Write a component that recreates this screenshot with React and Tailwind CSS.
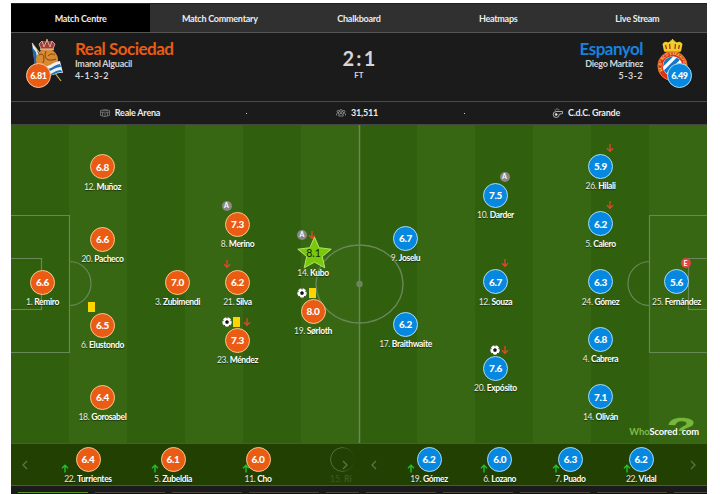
import clsx from "clsx";

const tabs = ["Match Centre", "Match Commentary", "Chalkboard", "Heatmaps", "Live Stream"];

// x / y are the centre of the rating badge inside the 696x318 pitch
const homePlayers = [
  { number: 1, name: "Remiro", rating: "6.6", x: 31.5, y: 157.5 },
  { number: 12, name: "Muñoz", rating: "6.8", x: 91.5, y: 42 },
  { number: 20, name: "Pacheco", rating: "6.6", x: 91.5, y: 114.5 },
  { number: 6, name: "Elustondo", rating: "6.5", x: 91.5, y: 200.5, events: ["yellow"] },
  { number: 18, name: "Gorosabel", rating: "6.4", x: 91.5, y: 272.5 },
  { number: 3, name: "Zubimendi", rating: "7.0", x: 166.5, y: 157.5 },
  { number: 8, name: "Merino", rating: "7.3", x: 226.5, y: 99.5, events: ["assist"] },
  { number: 21, name: "Silva", rating: "6.2", x: 226.5, y: 157.5, events: ["off"] },
  { number: 23, name: "Méndez", rating: "7.3", x: 226.5, y: 215.5, events: ["goal", "yellow", "off"] },
  { number: 14, name: "Kubo", rating: "8.1", x: 302, y: 128.5, events: ["assist", "off"], star: true },
  { number: 19, name: "Sørloth", rating: "8.0", x: 302, y: 186.5, events: ["goal", "yellow"] },
];

const awayPlayers = [
  { number: 9, name: "Joselu", rating: "6.7", x: 394.5, y: 113.5 },
  { number: 17, name: "Braithwaite", rating: "6.2", x: 394.5, y: 199.5 },
  { number: 10, name: "Darder", rating: "7.5", x: 484.5, y: 70.5, events: ["assist"] },
  { number: 12, name: "Souza", rating: "6.7", x: 484.5, y: 157, events: ["off"] },
  { number: 20, name: "Expósito", rating: "7.6", x: 484.5, y: 243.5, events: ["goal", "off"] },
  { number: 26, name: "Hilali", rating: "5.9", x: 589.5, y: 41.5, events: ["off"] },
  { number: 5, name: "Calero", rating: "6.2", x: 589.5, y: 99, events: ["off"] },
  { number: 24, name: "Gómez", rating: "6.3", x: 589.5, y: 157 },
  { number: 4, name: "Cabrera", rating: "6.8", x: 589.5, y: 214.5 },
  { number: 14, name: "Oliván", rating: "7.1", x: 589.5, y: 272 },
  { number: 25, name: "Fernández", rating: "5.6", x: 665.5, y: 157, events: ["error"] },
];

const homeSubs = [
  { number: 22, name: "Turrientes", rating: "6.4" },
  { number: 5, name: "Zubeldia", rating: "6.1" },
  { number: 11, name: "Cho", rating: "6.0" },
];

const awaySubs = [
  { number: 19, name: "Gómez", rating: "6.2" },
  { number: 6, name: "Lozano", rating: "6.0" },
  { number: 7, name: "Puado", rating: "6.3" },
  { number: 22, name: "Vidal", rating: "6.2" },
];

function EventIcon({ type }) {
  if (type === "yellow") {
    return (
      <span className="flex w-[10px] justify-center">
        <span className="h-[10px] w-[7px] bg-[#ffd500]" />
      </span>
    );
  }
  if (type === "off") {
    return (
      <svg className="h-[10px] w-[10px]" viewBox="0 0 10 10" fill="none" stroke="#e0492c" strokeWidth="1.3">
        <path d="M5 1v7.5M2 5.200 5 8.400l3-3.200" />
      </svg>
    );
  }
  if (type === "goal") {
    return (
      <svg className="h-[10px] w-[10px]" viewBox="0 0 10 10">
        <circle cx="5" cy="5" r="4.7" fill="#fff" />
        <path
          d="M5 3.1l1.9 1.4-.7 2.2H3.8l-.7-2.2zM3.6.5h2.8L5 1.6zM.4 4.3 1 2.5l.7 1.6zM9.6 4.3 9 2.5l-.7 1.6zM1.6 8.2 3 7.9l.1 1.4zM8.4 8.2 7 7.9l-.1 1.4z"
          fill="#111"
        />
      </svg>
    );
  }
  return (
    <span
      className={clsx(
        "flex h-[10px] w-[10px] items-center justify-center rounded-full text-[7px] leading-none font-bold text-white",
        type === "assist" ? "bg-[#888]" : "bg-[#e34444]"
      )}
    >
      {type === "assist" ? "A" : "E"}
    </span>
  );
}

function Rating({ value, home }) {
  return (
    <span
      className={clsx(
        "flex h-[25px] w-[25px] items-center justify-center rounded-full border text-[10px] leading-none font-black tracking-[-0.3px] text-white",
        home ? "border-[#f5c98c] bg-[#ea5b13]" : "border-[#a9dcf5] bg-[#0788e0]"
      )}
    >
      {value}
    </span>
  );
}

function StarRating({ value }) {
  return (
    <span className="relative flex h-[25px] w-[25px] items-center justify-center">
      <svg className="absolute -top-[5px] -left-[4px] h-[34px] w-[35px]" viewBox="0 0 35 34">
        <path
          d="M17.5 1 22.1 11.7 34.2 13.200 25.300 20.600 27.800 31.800 17.5 26.200 7.2 31.800 9.700 20.600 .8 13.200 12.9 11.7z"
          fill="#79c80b"
          stroke="#b9ed6c"
          strokeWidth=".9"
        />
      </svg>
      <span className="relative pl-px text-[10.5px] leading-none font-medium text-[#17300a]">{value}</span>
    </span>
  );
}

function PlayerName({ number, name }) {
  return (
    <span className="text-[8.5px] leading-[11px] tracking-[-0.35px] whitespace-nowrap text-[#e6ece1] [text-shadow:0_1px_1px_rgba(0,0,0,0.5)]">
      {number}. <b className="font-bold text-white">{name}</b>
    </span>
  );
}

function Player({ player, home }) {
  return (
    <div
      className="absolute flex w-0 -translate-y-[13px] flex-col items-center gap-[2.5px]"
      style={{ left: player.x, top: player.y }}
    >
      {player.star ? <StarRating value={player.rating} /> : <Rating value={player.rating} home={home} />}
      <PlayerName number={player.number} name={player.name} />
      {player.events ? (
        <div className={clsx("absolute -top-[11px] flex", home ? "-left-[16px]" : "-right-[14px]")}>
          {player.events.map((type) => (
            <EventIcon key={type} type={type} />
          ))}
        </div>
      ) : null}
    </div>
  );
}

function PitchLines() {
  return (
    <svg className="h-full w-full" viewBox="0 0 696 318" fill="none" stroke="#6a8759" strokeWidth="1.2">
      <path d="M348.500 0V318" strokeWidth="1.500" />
      <ellipse cx="348.500" cy="159" rx="43.500" ry="39" strokeWidth="1.400" />
      <circle cx="348.500" cy="159" r="3.200" fill="#6a8759" stroke="none" />
      <path d="M0 90.500H58.500V227.500H0M0 133.500H30.500V184.500H0M58.500 136.500a21.500 22 0 0 1 0 44" />
      <path d="M696 90.500H638.500V227.500H696M696 133.500H677.500V184.500H696M638.500 136.500a21.500 22 0 0 0 0 44" />
    </svg>
  );
}

function Logo() {
  return (
    <div className="absolute top-[291px] right-[8px] flex w-[68px] flex-col text-[9.400px] leading-[32px] font-bold tracking-[-0.1px] text-white">
      <svg className="absolute top-[1px] right-[5px] h-[18px] w-[26px]" viewBox="0 0 26 18">
        <path
          d="M.5 8C1.500 3 6.500.7 13.500.7 21 .7 25.800 2.800 25.600 6c-.2 3-4.600 4.300-7.600 5.400-1.800.7-2.700 1.500-3.200 2.600H10.600c.2-2 2-3.400 4.200-4.500 2.300-1.200 3.800-1.900 3.700-3.200-.1-1.400-2-2.100-4.800-2C9.500 4.400 8.300 6 7.300 8.200z"
          fill="#75b63b"
        />
      </svg>
      <span className="relative flex justify-end whitespace-nowrap">
        <span className="text-[#80b94a]">Who</span>Scored
        <span className="px-[1px] font-black text-[#80d03a]">.</span>com
      </span>
    </div>
  );
}

function Chevron({ right }) {
  return (
    <svg className="h-[10px] w-[6px] shrink-0" viewBox="0 0 6 10" fill="none" stroke="#5c7543" strokeWidth="1.3">
      <path d={right ? "M1 1l4 4-4 4" : "M5 1L1 5l4 4"} />
    </svg>
  );
}

function Sub({ player, home }) {
  return (
    <div className="relative flex w-0 flex-col items-center gap-[2.5px]">
      <Rating value={player.rating} home={home} />
      <div className="relative flex">
        <PlayerName number={player.number} name={player.name} />
        <svg
          className="absolute -top-[10px] -left-[3px] h-[9px] w-[8px]"
          viewBox="0 0 8 9"
          fill="none"
          stroke="#1fc32a"
          strokeWidth="1.4"
        >
          <path d="M4 8.500V1.500M1 4.300 4 1.300l3 3" />
        </svg>
      </div>
    </div>
  );
}

function HomeCrest() {
  return (
    <svg className="h-[44px] w-[35px]" viewBox="0 0 33 44">
      <path d="M2 4 31 42" stroke="#c7b552" strokeWidth="1.200" />
      <path d="M2 4l5 7 7 20-9-5z" fill="#e8eef4" />
      <path d="M2 8l4 5 3 16-4-2zM8 14l5 8v8z" fill="#1e69ab" />
      <circle cx="17" cy="21" r="11" fill="#d9892f" />
      <path d="M9 16c5-3 6 3 4 8M16 12c-3 8 2 11 10 8M18 17c3-3 5-2 7-1" stroke="#7c4517" fill="none" />
      <path d="M13 28c6 0 10-5 17-6l3 12c-6-1-11 4-18 3z" fill="#eef3f8" />
      <path d="M14 31c6 0 10-5 16-6l1 3c-6 0-10 5-16 5zM16 36c6 0 9-5 15-5l1 2c-6 0-8 3-14 4z" fill="#2471b5" />
      <path d="M11 10 9 5l3-3h10l3 3-2 5z" fill="#a63a3d" />
      <path d="M11 10 9 5l3-3 2 6 3-7 3 7 2-6 3 3-2 5z" fill="none" stroke="#d8c5a0" strokeWidth=".8" />
      <path d="M17 0v3M10 10.500h14" stroke="#d9b36c" strokeWidth="1.400" />
    </svg>
  );
}

function AwayCrest() {
  return (
    <svg className="h-[44px] w-[31px]" viewBox="0 0 31 44">
      <defs>
        <clipPath id="crest">
          <circle cx="15.500" cy="27" r="9.500" />
        </clipPath>
        <path id="ring" d="M7.500 34.500a11 11 0 1 1 16 0" />
      </defs>
      <circle cx="15.500" cy="27" r="15" fill="#d9331f" />
      <circle cx="15.500" cy="27" r="14.500" fill="none" stroke="#e4a72c" strokeWidth=".6" />
      <text fontSize="3.900" fontWeight="900" fill="#f7d146">
        <textPath href="#ring" startOffset="3">
          RL Dº RCD ESPANYOL
        </textPath>
      </text>
      <circle cx="15.500" cy="27" r="9.800" fill="#fff" />
      <path d="M1 30 18 13M4 37 26 15M10 41 30 21" stroke="#1679c5" strokeWidth="3.800" clipPath="url(#crest)" />
      <path d="M7 12.500 5.500 5Q8 1.500 11 3.500 15.500 0 20 3.500 23 1.500 25.500 5L24 12.500z" fill="#efd02b" />
      <path d="M9.500 10 8.500 6M13 10l-.4-5M18 10l.4-5M21.500 10l1-4" stroke="#b52c1d" strokeWidth="1.300" />
      <path d="M15.500 0v4M13.500 1.800h4" stroke="#f2d333" strokeWidth="1.300" />
      <path d="M8 12.500h15" stroke="#d79d1b" strokeWidth="1.300" />
    </svg>
  );
}

function StadiumIcon() {
  return (
    <svg className="h-[8px] w-[10px]" viewBox="0 0 10 8" fill="none" stroke="#8b8b8b" strokeWidth=".7">
      <path d="M.5 1.500Q5-.4 9.500 1.500V6.500Q5 8.500.5 6.500zM.5 3Q5 5 9.500 3M2.500 4v3M5 4.500v3M7.500 4v3M2 1.800h6" />
    </svg>
  );
}

function CrowdIcon() {
  return (
    <svg className="h-[8px] w-[10px]" viewBox="0 0 10 8" fill="none" stroke="#aaa" strokeWidth=".7">
      <circle cx="5" cy="2" r="1.400" />
      <circle cx="2.200" cy="2.500" r="1.100" />
      <circle cx="7.800" cy="2.500" r="1.100" />
      <path d="M2.800 7V5.500Q5 3 7.200 5.500V7zM.4 6.500V5Q1.500 3.500 3 4.500M9.600 6.500V5Q8.500 3.500 7 4.500" />
    </svg>
  );
}

function WhistleIcon() {
  return (
    <svg className="h-[10px] w-[11px]" viewBox="0 0 11 10" fill="none" stroke="#d0d0d0" strokeWidth=".8">
      <path d="M6 3.500H10.500V5.500L7.200 6.300A3 3 0 1 1 4.200 3.500zM3 1.500l.5 1M5 .3v1.400M7 1.300l-.6 1" />
      <circle cx="4.200" cy="6.400" r="1" fill="#fff" />
    </svg>
  );
}

function Header() {
  return (
    <div className="flex h-[69px] justify-between border-b border-[#4b4b4b] bg-[#1b1b1b] text-[#d5d5d5]">
      <div className="flex w-[280px] gap-[14px] pt-[6px] pl-[18px]">
        <div className="relative h-[44px] w-[32px]">
          <HomeCrest />
          <span className="absolute top-[24px] -left-[3px] flex h-[25px] w-[25px] items-center justify-center rounded-full border border-[#f2c8aa] bg-[#ea5b13] text-[9px] font-black tracking-[-0.3px] text-white">
            6.81
          </span>
        </div>
        <div className="flex flex-col pt-[1px]">
          <span className="text-[17px] leading-[18px] font-bold tracking-[-0.5px] text-[#ea5b13]">Real Sociedad</span>
          <span className="text-[9px] leading-[12px] font-bold tracking-[-0.25px]">Imanol Alguacil</span>
          <span className="text-[9px] leading-[11px] font-bold tracking-[0.4px]">4-1-3-2</span>
        </div>
      </div>
      <div className="flex flex-col items-center pt-[13px]">
        <span className="pl-[2px] text-[20px] leading-[25px] font-bold tracking-[2.200px]">2:1</span>
        <span className="text-[8px] leading-[9px] font-bold">FT</span>
      </div>
      <div className="flex w-[280px] justify-end gap-[14px] pt-[6px] pr-[19px]">
        <div className="flex flex-col items-end pt-[1px]">
          <span className="text-[17px] leading-[18px] font-bold tracking-[-0.5px] text-[#1783dc]">Espanyol</span>
          <span className="text-[9px] leading-[12px] font-bold tracking-[-0.3px]">Diego Martínez</span>
          <span className="text-[9px] leading-[11px] font-bold tracking-[0.4px]">5-3-2</span>
        </div>
        <div className="relative h-[44px] w-[31px]">
          <AwayCrest />
          <span className="absolute top-[24px] left-[10px] flex h-[25px] w-[25px] items-center justify-center rounded-full border border-[#a9dcf5] bg-[#0788e0] text-[9px] font-black tracking-[-0.3px] text-white">
            6.49
          </span>
        </div>
      </div>
    </div>
  );
}

function BottomTabs({ active }) {
  return (
    <div className="flex flex-1 gap-[7px] overflow-hidden pt-[6px] pl-[7px]">
      {[0, 1, 2, 3, 4].map((i) => (
        <span
          key={i}
          className={clsx(
            "h-[2px] w-[70px] shrink-0 border-t bg-[#111]",
            active && i === 0 ? "border-[#5b9416]" : "border-[#4c4644]"
          )}
        />
      ))}
    </div>
  );
}

export default function App() {
  return (
    <div className="h-[494px] w-[720px] overflow-hidden bg-white pt-[3px] pl-[11px] font-['Lato','Open_Sans',sans-serif]">
      <div className="flex h-[491px] w-[696px] flex-col bg-[#1b1b1b]">
        <nav className="grid h-[30px] grid-cols-5 border-t border-b border-t-[#222] border-b-[#555] bg-[#303030]">
          {tabs.map((tab, i) => (
            <button
              key={tab}
              type="button"
              className={clsx("pt-px text-[9px] font-bold tracking-[-0.25px] text-[#ececec]", i === 0 && "bg-black")}
            >
              {tab}
            </button>
          ))}
        </nav>

        <Header />

        <div className="grid h-[23px] grid-cols-[236px_218px_242px] items-center border-b border-[#454545] text-[9px] font-bold tracking-[-0.2px] text-[#ececec]">
          <div className="relative flex items-center justify-center gap-[5px] pl-[2px]">
            <StadiumIcon />
            Reale Arena
            <span className="absolute right-0 h-px w-px bg-[#ccc]" />
          </div>
          <div className="relative flex items-center justify-center gap-[5px] pl-[2px]">
            <CrowdIcon />
            31,511
            <span className="absolute right-0 h-px w-px bg-[#ccc]" />
          </div>
          <div className="flex items-center justify-center gap-[5px]">
            <WhistleIcon />
            C.d.C. Grande
          </div>
        </div>

        <div className="relative h-[318px] bg-[repeating-linear-gradient(90deg,#30600e_0px,#30600e_58px,#376713_58px,#376713_116px)]">
          <PitchLines />
          {homePlayers.map((player) => (
            <Player key={player.name} player={player} home />
          ))}
          {awayPlayers.map((player) => (
            <Player key={player.name} player={player} />
          ))}
          <Logo />
        </div>

        <div className="flex h-[43px] border-t border-b border-t-[#3f642b] border-b-[#3f642b] bg-[#234003] pt-[2.5px]">
          <div className="relative flex w-[348px]">
            <div className="flex gap-[85px] pl-[77px]">
              {homeSubs.map((player) => (
                <Sub key={player.name} player={player} home />
              ))}
            </div>
            <div className="absolute top-0 right-0 w-[29px] text-[8.5px] leading-[11px] whitespace-nowrap text-[#3d5a20]">
              <div className="mb-[2.5px] h-[25px] w-[25px] rounded-full border border-[#5a7440] [mask-image:linear-gradient(90deg,black_40%,transparent)]" />
              15. <b className="text-[#3d5a20]">Ri</b>
            </div>
            <div className="absolute top-[13px] left-[11px]">
              <Chevron />
            </div>
            <div className="absolute top-[13px] right-[11px]">
              <Chevron right />
            </div>
          </div>
          <div className="relative flex w-[348px]">
            <div className="flex gap-[70.7px] pl-[70px]">
              {awaySubs.map((player) => (
                <Sub key={player.name} player={player} />
              ))}
            </div>
            <div className="absolute top-[13px] left-[12px]">
              <Chevron />
            </div>
            <div className="absolute top-[13px] right-[11px]">
              <Chevron right />
            </div>
          </div>
        </div>

        <div className="flex h-[8px]">
          <BottomTabs active />
          <BottomTabs />
        </div>
      </div>
    </div>
  );
}
